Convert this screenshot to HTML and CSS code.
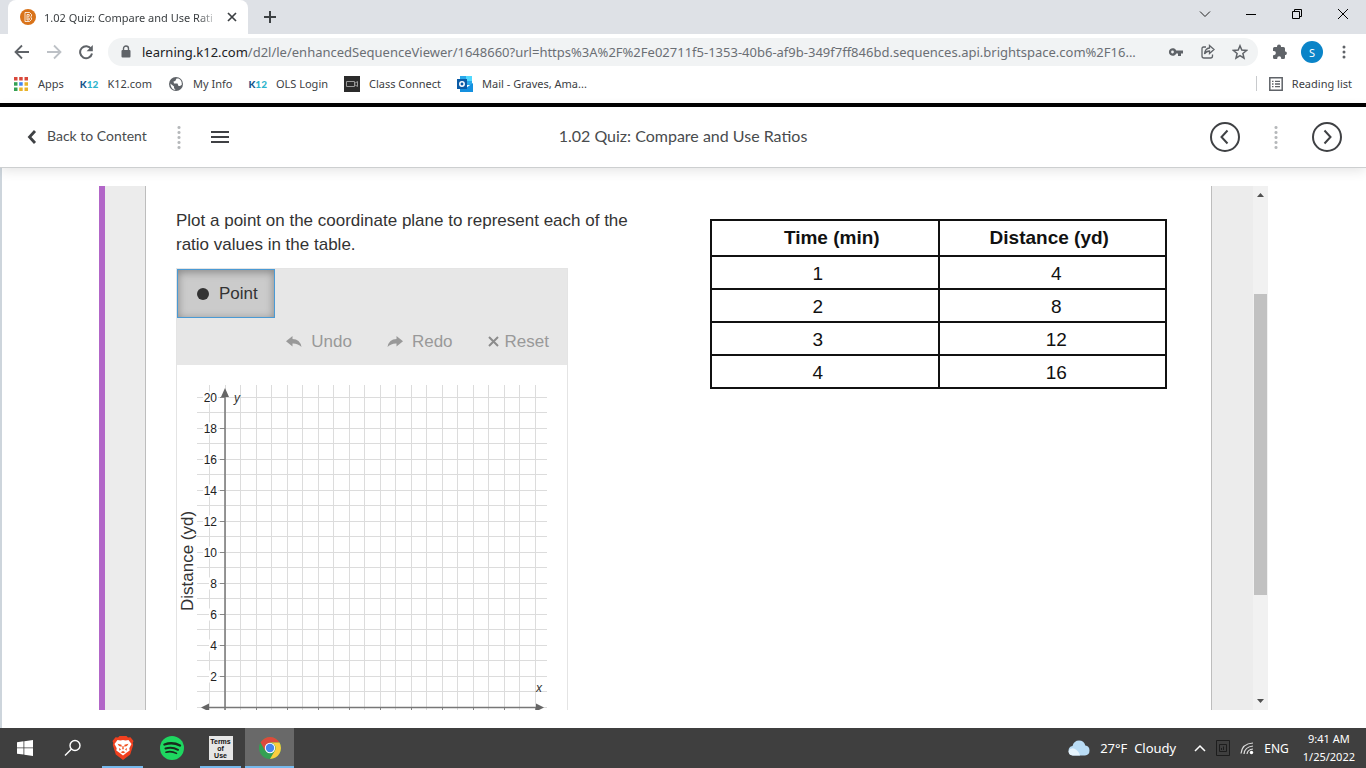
FILE: index.html
```html
<!DOCTYPE html>
<html lang="en">

<head>
    <meta charset="UTF-8">
    <title>1.02 Quiz: Compare and Use Ratios</title>
    <link rel="stylesheet" href="styles.css">
</head>

<body>
    <div class="tab-strip">
        <div class="tab">
            <svg class="tab-icon" width="16" height="16" viewBox="0 0 16 16">
                <circle cx="8" cy="8" r="8" fill="#d9731a"/>
                <path d="M5 3.500h4.500l2 2v1.700l-1 .8 1 .8v1.700l-2 2H5zM7 5.500v5.500M7 5.500h2.200v1.800H7.500M7.500 9h1.700v2H7" fill="none" stroke="#fff" stroke-width=".8"/>
            </svg>
            <span class="tab-title">1.02 Quiz: Compare and Use Rati</span>
            <button class="icon-button" aria-label="Close tab">
                <svg width="10" height="10" viewBox="0 0 10 10"><path d="M1 1l8 8M9 1l-8 8" stroke="#3c4043" stroke-width="1.700"/></svg>
            </button>
        </div>
        <button class="icon-button new-tab" aria-label="New tab">
            <svg width="12" height="12" viewBox="0 0 12 12"><path d="M6 0v12M0 6h12" stroke="#3c4043" stroke-width="2"/></svg>
        </button>
        <div class="window-buttons">
            <button class="icon-button" aria-label="Search tabs"><svg width="12" height="12" viewBox="0 0 12 12"><path d="M1 3.500l5 5 5-5" fill="none" stroke="#222"/></svg></button>
            <button class="icon-button" aria-label="Minimize"><svg width="12" height="12" viewBox="0 0 12 12"><path d="M1 6.500h10" stroke="#000"/></svg></button>
            <button class="icon-button" aria-label="Restore"><svg width="12" height="12" viewBox="0 0 12 12"><path d="M1.500 3.500h7v7h-7zM3.500 3.500v-2h7v7h-2" fill="none" stroke="#000"/></svg></button>
            <button class="icon-button" aria-label="Close"><svg width="12" height="12" viewBox="0 0 12 12"><path d="M1 1l10 10M11 1L1 11" stroke="#000"/></svg></button>
        </div>
    </div>

    <div class="toolbar">
        <button class="icon-button" aria-label="Back"><svg width="16" height="16" viewBox="0 0 16 16"><path d="M15 8H2M8 1.500L1.500 8 8 14.500" fill="none" stroke="#5f6368" stroke-width="1.800"/></svg></button>
        <button class="icon-button" aria-label="Forward"><svg width="16" height="16" viewBox="0 0 16 16"><path d="M1 8h13M8 1.500L14.500 8 8 14.500" fill="none" stroke="#bdc1c6" stroke-width="1.800"/></svg></button>
        <button class="icon-button" aria-label="Reload"><svg width="16" height="16" viewBox="0 0 16 16"><path d="M13.200 5A6 6 0 1 0 14 9.500" fill="none" stroke="#5f6368" stroke-width="2"/><path d="M14.800 1v6.200H8.600z" fill="#5f6368"/></svg></button>
        <div class="address-bar">
            <svg width="10" height="14" viewBox="0 0 10 14"><path d="M2.500 6V3.500a2.500 2.500 0 0 1 5 0V6" fill="none" stroke="#5f6368" stroke-width="1.400"/><rect x=".5" y="5" width="9" height="7.500" rx="1" fill="#5f6368"/></svg>
            <div class="url"><span class="host">learning.k12.com</span>/d2l/le/enhancedSequenceViewer/1648660?url=https%3A%2F%2Fe02711f5-1353-40b6-af9b-349f7ff846bd.sequences.api.brightspace.com%2F16...</div>
            <button class="icon-button" aria-label="Saved passwords"><svg width="16" height="16" viewBox="0 0 16 16"><path d="M8.200 6.500A3.800 3.800 0 1 0 8.200 9.500H10V12h3V9.500h2V6.500zM4.500 9.400a1.400 1.400 0 1 1 0-2.800 1.400 1.400 0 0 1 0 2.800z" fill="#5f6368" fill-rule="evenodd"/></svg></button>
            <button class="icon-button" aria-label="Share"><svg width="16" height="16" viewBox="0 0 16 16"><path d="M6 3H3.500Q2 3 2 4.500v7.500q0 2 2 2h6.500q2 0 2-2v-1.500M9.500 1.500L14 5.500l-4.500 4V7Q6.500 7 4.500 10 5 4.500 9.500 4z" fill="none" stroke="#5f6368" stroke-width="1.300"/></svg></button>
            <button class="icon-button" aria-label="Bookmark this page"><svg width="16" height="16" viewBox="0 0 16 16"><path d="M8 1.800l1.800 4.300 4.700.4-3.600 3 1.100 4.600L8 11.600l-4 2.500 1.100-4.600-3.600-3 4.700-.4z" fill="none" stroke="#5f6368" stroke-width="1.500"/></svg></button>
        </div>
        <div class="toolbar-right">
            <button class="icon-button" aria-label="Extensions"><svg width="16" height="16" viewBox="0 0 16 16"><path d="M13.500 7.500H13V4.500Q13 3 11.500 3H9V2.500a2 2 0 0 0-4 0V3H2.500Q1 3 1 4.500V7h.8a2 2 0 0 1 0 4.200H1v2.300Q1 15 2.500 15h2.700v-.8a2 2 0 0 1 4 0v.8h2.300q1.500 0 1.500-1.500v-2.500h.5a1.800 1.800 0 0 0 0-3.500z" fill="#5f6368"/></svg></button>
            <button class="avatar">S</button>
            <button class="icon-button" aria-label="Menu"><svg width="16" height="16" viewBox="0 0 16 16" fill="#5f6368"><circle cx="8" cy="3" r="1.500"/><circle cx="8" cy="8" r="1.500"/><circle cx="8" cy="13" r="1.500"/></svg></button>
        </div>
    </div>

    <nav class="bookmarks">
        <a href="#" class="bookmark apps">
            <svg width="14" height="14" viewBox="0 0 14 14">
                <path d="M0 0h3.500v3.500H0zM5.200 0h3.500v3.500H5.200zM10.500 0H14v3.500h-3.500z" fill="#d9483b"/>
                <path d="M0 5.200h3.500v3.500H0z" fill="#34a053"/><path d="M5.200 5.200h3.500v3.500H5.200z" fill="#4285f4"/>
                <path d="M10.500 5.200H14v3.500h-3.500zM5.200 10.500h3.500V14H5.200zM10.500 10.500H14V14h-3.500z" fill="#e9b32a"/><path d="M0 10.500h3.500V14H0z" fill="#34a053"/>
            </svg>Apps</a>
        <a href="#" class="bookmark"><span class="k12">K<span class="k12-num">12</span></span>K12.com</a>
        <a href="#" class="bookmark">
            <svg width="16" height="16" viewBox="0 0 16 16"><circle cx="8" cy="8" r="7" fill="#5f6368"/><path d="M8.500 2.500Q8 5 5.500 5.500L6 7.500h3.500l1 2.500H12l1.800-1.200Q14 4 10.500 2.500zM2.300 7.500L6 10.500v1.500l1.500 2Q3 13.500 2.300 7.500z" fill="#fff"/></svg>My Info</a>
        <a href="#" class="bookmark"><span class="k12">K<span class="k12-num">12</span></span>OLS Login</a>
        <a href="#" class="bookmark">
            <svg width="16" height="16" viewBox="0 0 16 16"><path d="M0 0h16v16H0z" fill="#2b2b2b"/><path d="M2.500 5.500h8v5h-8zM10.500 7.500l3-2v5l-3-2" fill="none" stroke="#999"/></svg>Class Connect</a>
        <a href="#" class="bookmark">
            <svg width="16" height="16" viewBox="0 0 16 16"><path d="M3 0h12v9H3z" fill="#28a8ea"/><path d="M9 0h6v5H9z" fill="#50d9ff"/><path d="M3 9l6 3 7-5v9H3z" fill="#1490df"/><path d="M0 3h10v10H0z" fill="#0a5ba6"/><circle cx="5" cy="8" r="2.200" fill="none" stroke="#fff" stroke-width="1.500"/></svg>Mail - Graves, Ama...</a>
        <a href="#" class="bookmark reading-list">
            <svg width="14" height="14" viewBox="0 0 14 14"><path d="M.8.800h12.400v12.400H.8z" fill="none" stroke="#5f6368" stroke-width="1.500"/><path d="M3 4.300h1.500M6 4.300h5M3 7h1.500M6 7h5M3 9.700h1.500M6 9.700h5" stroke="#5f6368" stroke-width="1.300"/></svg>Reading list</a>
    </nav>

    <header class="viewer-header">
        <div class="header-left">
            <a href="#" class="back-link">
                <svg width="10" height="14" viewBox="0 0 10 14"><path d="M8 1L2.500 7 8 13" fill="none" stroke="#3f4144" stroke-width="2.800"/></svg><span class="back-text">Back to Content</span></a>
            <span class="dots"></span>
            <button class="icon-button" aria-label="Table of contents"><svg width="18" height="12" viewBox="0 0 18 12"><path d="M0 1h18M0 6h18M0 11h18" stroke="#3f4144" stroke-width="2"/></svg></button>
        </div>
        <h1 class="viewer-title">1.02 Quiz: Compare and Use Ratios</h1>
        <div class="header-right">
            <button class="icon-button" aria-label="Previous"><svg width="30" height="30" viewBox="0 0 30 30" fill="none" stroke="#3f4144" stroke-width="2"><circle cx="15" cy="15" r="14"/><path d="M17.500 8.500L11.500 15l6 6.500"/></svg></button>
            <span class="dots"></span>
            <button class="icon-button" aria-label="Next"><svg width="30" height="30" viewBox="0 0 30 30" fill="none" stroke="#3f4144" stroke-width="2"><circle cx="15" cy="15" r="14"/><path d="M12.500 8.500l6 6.500-6 6.500"/></svg></button>
        </div>
    </header>

    <main class="viewer">
        <div class="quiz">
            <div class="question">
                <section class="plot">
                    <p class="prompt">Plot a point on the coordinate plane to represent each of the ratio values in the table.</p>
                    <div class="graph-tool">
                        <div class="graph-bar">
                            <button class="point-button"><span class="point-dot"></span>Point</button>
                            <div class="actions">
                                <button class="action" disabled><svg width="16" height="12" viewBox="0 0 16 12"><path d="M6.500 0v3Q14 3 15.500 11 12 7.300 6.500 7.500v3L0 5.200z" fill="#999"/></svg>Undo</button>
                                <button class="action" disabled><svg width="16" height="12" viewBox="0 0 16 12"><path d="M9.500 0v3Q2 3 .5 11 4 7.300 9.500 7.500v3L16 5.200z" fill="#999"/></svg>Redo</button>
                                <button class="action reset" disabled><svg width="11" height="11" viewBox="0 0 11 11"><path d="M1 1l9 9M10 1l-9 9" stroke="#8c8c8c" stroke-width="2"/></svg>Reset</button>
                            </div>
                        </div>
                        <svg class="graph" id="graph" width="390" height="400" viewBox="0 0 390 400">
                            <g id="grid" class="grid"></g>
                            <g id="labels" class="tick-label"></g>
                            <path class="axis" d="M48 28v372M28 342.500h335"/>
                            <path class="arrow" d="M48 23l-4 9h8zM24 342.500l8-4v8zM367 342.500l-8-4v8z"/>
                            <text class="axis-name" x="57" y="37">y</text>
                            <text class="axis-name" x="359" y="327">x</text>
                            <text class="axis-title" transform="translate(16 246) rotate(-90)">Distance (yd)</text>
                        </svg>
                    </div>
                </section>
                <section class="data">
                    <table class="ratios">
                        <thead>
                            <tr><th>Time (min)</th><th>Distance (yd)</th></tr>
                        </thead>
                        <tbody>
                            <tr><td>1</td><td>4</td></tr>
                            <tr><td>2</td><td>8</td></tr>
                            <tr><td>3</td><td>12</td></tr>
                            <tr><td>4</td><td>16</td></tr>
                        </tbody>
                    </table>
                </section>
            </div>
            <div class="scrollbar">
                <svg width="7" height="4" viewBox="0 0 7 4"><path d="M3.500 0L7 4H0z" fill="#505050"/></svg>
                <div class="track"><div class="thumb"></div></div>
                <svg width="7" height="4" viewBox="0 0 7 4"><path d="M0 0h7L3.500 4z" fill="#505050"/></svg>
            </div>
        </div>
    </main>

    <footer class="taskbar">
        <button class="task" aria-label="Start"><svg width="16" height="16" viewBox="0 0 16 16"><path d="M0 2.200l6.500-.9v6.200H0zM7.300 1.200L16 0v7.500H7.300zM0 8.300h6.500v6.300L0 13.700zM7.300 8.300H16V16l-8.700-1.200z" fill="#fff"/></svg></button>
        <button class="task" aria-label="Search"><svg width="20" height="18" viewBox="0 0 20 18"><circle cx="11" cy="6.500" r="5" fill="none" stroke="#fff" stroke-width="1.400"/><path d="M7.500 10L1 16.500" stroke="#fff" stroke-width="1.500"/></svg></button>
        <button class="task running" aria-label="Brave">
            <svg width="22" height="24" viewBox="0 0 22 24"><path d="M6 1.500L7.500 0h7L16 1.500l2.500-.2L21.500 5l-.8 2 .5 2-3 9.500L11 24l-7.200-5.500L.8 9l.5-2-.8-2 3-3.700z" fill="#f1401f"/><path d="M5.500 4l3 .6L11 4l2.500.6 3-.6 3 4-2.200 4.200.4 2.300-3.200 2.300L11 19.500l-3.500-2.700-3.200-2.300.4-2.300L2.500 8z" fill="#fff"/><path d="M5.500 7.800l4 .9.200 2L7 10zM16.500 7.800l-4 .9-.2 2L15 10zM7 12l2 1.200-1.500 1.500zM15 12l-2 1.200 1.500 1.500zM8.500 16.200L11 15l2.500 1.200L11 17.200zM10.500 10h1l.3 3-.8.500-.8-.5z" fill="#f1501f"/></svg>
        </button>
        <button class="task" aria-label="Spotify">
            <svg width="24" height="24" viewBox="0 0 24 24"><circle cx="12" cy="12" r="12" fill="#1ed760"/><path d="M4.500 8.500Q12.500 5.500 20 9.500" fill="none" stroke="#182b1d" stroke-width="2.400" stroke-linecap="round"/><path d="M5.500 12.500q6.500-2 12.500 1.300" fill="none" stroke="#182b1d" stroke-width="2" stroke-linecap="round"/><path d="M6 16.200q5.500-1.500 10.500 1.200" fill="none" stroke="#182b1d" stroke-width="1.600" stroke-linecap="round"/></svg>
        </button>
        <button class="task running"><span class="terms">Terms<br>of<br>Use</span></button>
        <button class="task active" aria-label="Chrome">
            <svg width="22" height="22" viewBox="0 0 22 22"><circle cx="11" cy="11" r="11" fill="#34a053"/><path d="M1.500 5.500A11 11 0 0 1 20.500 5.500H11L6.200 13.700z" fill="#dc4a3d"/><path d="M20.500 5.500A11 11 0 0 1 11 22l4.800-8.200A5.500 5.500 0 0 0 11 5.500z" fill="#fbcd3f"/><circle cx="11" cy="11" r="5.200" fill="#fff"/><circle cx="11" cy="11" r="4.200" fill="#4684ee"/></svg>
        </button>
        <div class="tray">
            <svg width="22" height="16" viewBox="0 0 22 16"><path d="M5 15.500a4.800 4.800 0 0 1-.5-9.500Q6 .5 11 .5q5 0 6.300 5 4.200.5 4.200 5t-4.500 5z" fill="#b9dcf5"/><path d="M4.500 15.500q-4-.5-4-4.500Q3 7 7 9q4 2 5 6.500z" fill="#e7f4fd"/></svg>
            <span class="weather">27°F&nbsp; Cloudy</span>
            <svg width="12" height="8" viewBox="0 0 12 8"><path d="M1 7l5-5 5 5" fill="none" stroke="#fff" stroke-width="1.500"/></svg>
            <svg width="14" height="16" viewBox="0 0 14 16"><path d="M.5.500h13v15H.5zM3.500 4.500h7v7h-7zM5.500 8v2M7.500 6.500V10" fill="none" stroke="#1d1d1d"/></svg>
            <svg width="14" height="14" viewBox="0 0 14 14"><path d="M1 12.500Q2 2.500 13 2M4 13Q4.500 6 13 5M7 13q.5-4.500 6-5" fill="none" stroke="#ddd" stroke-width="1.200"/><circle cx="11.500" cy="11.500" r="1.700" fill="#fff"/></svg>
            <span class="lang">ENG</span>
            <div class="clock">9:41 AM<br>1/25/2022</div>
        </div>
    </footer>

    <script>
        let step = 15.5;
        let originX = 48;
        let originY = 342;

        function add(parent, tag, attrs, text) {
            let el = document.createElementNS('http://www.w3.org/2000/svg', tag);
            for (let key in attrs) {
                el.setAttribute(key, attrs[key]);
            }
            if (text) {
                el.textContent = text;
            }
            document.getElementById(parent).appendChild(el);
        }

        // vertical and horizontal grid lines
        for (let i = -1; i <= 20; i++) {
            let x = Math.floor(originX + i * step) + 0.5;
            let y = Math.floor(originY - i * step) + 0.5;
            add('grid', 'path', { d: `M${x} 20V400` });
            add('grid', 'path', { d: `M20 ${y}H370` });
        }

        // ticks and numbers on every second line
        for (let i = 2; i <= 20; i += 2) {
            let x = Math.floor(originX + i * step) + 0.5;
            let y = Math.floor(originY - i * step) + 0.5;
            add('grid', 'path', { d: `M${x} 342v4`, class: 'tick' });
            add('labels', 'rect', { x: i < 10 ? 32 : 26, y: y - 6, width: i < 10 ? 9 : 15, height: 12, class: 'label-back' });
            add('labels', 'text', { x: 40, y: y + 4 }, i);
            add('grid', 'path', { d: `M43 ${y}h5`, class: 'tick' });
        }
    </script>
</body>

</html>
```

FILE: styles.css
```css
* {
    box-sizing: border-box;
}

body {
    margin: 0;
    height: 100vh;
    display: flex;
    flex-direction: column;
    overflow: hidden;
    background: #fff;
    color: #3c4043;
    font-family: "Noto Sans", "Open Sans", sans-serif;
    font-size: 11px;
}

button {
    font: inherit;
    color: inherit;
    border: 0;
    padding: 0;
    background: none;
}

a {
    color: inherit;
    text-decoration: none;
}

svg {
    display: block;
    flex: none;
}

.icon-button {
    display: flex;
    flex: none;
}

/* browser window */
.tab-strip {
    display: flex;
    align-items: center;
    flex: none;
    height: 34px;
    padding: 0 17px 0 8px;
    background: #dee1e6;
}

.tab {
    display: flex;
    align-items: center;
    width: 240px;
    height: 34px;
    padding: 0 11px 0 12px;
    background: #fff;
    border-radius: 8px 8px 0 0;
}

.tab-title {
    flex: 1;
    margin: 0 8px;
    white-space: nowrap;
    -webkit-mask-image: linear-gradient(to right, #000 88%, transparent);
    mask-image: linear-gradient(to right, #000 88%, transparent);
}

.new-tab {
    margin-left: 16px;
}

.window-buttons {
    display: flex;
    gap: 34px;
    margin-left: auto;
    padding-bottom: 6px;
}

.toolbar {
    display: flex;
    align-items: center;
    gap: 16px;
    flex: none;
    height: 36px;
    padding: 0 14px;
}

.address-bar {
    display: flex;
    align-items: center;
    gap: 16px;
    flex: 1;
    min-width: 0;
    height: 28px;
    margin: 0 -2px;
    padding: 0 10px 0 13px;
    background: #f1f3f4;
    border-radius: 14px;
}

.url {
    flex: 1;
    min-width: 0;
    margin-left: -5px;
    white-space: nowrap;
    color: #6b6f74;
    font-size: 13px;
}

.host {
    color: #202124;
}

.toolbar-right {
    display: flex;
    align-items: center;
    gap: 13px;
}

.avatar {
    width: 22px;
    height: 22px;
    border-radius: 50%;
    background: #0a84c8;
    color: #fff;
}

.bookmarks {
    display: flex;
    align-items: center;
    gap: 16px;
    flex: none;
    height: 37px;
    padding: 0 14px;
    padding-bottom: 6px;
    border-bottom: 4px solid #000;
}

.bookmark {
    display: flex;
    align-items: center;
    gap: 9px;
    white-space: nowrap;
}

.apps {
    gap: 10px;
}

.k12 {
    color: #17568c;
    font: 900 10px Lato, sans-serif;
}

.k12-num {
    color: #2fb4cc;
}

.reading-list {
    margin-left: auto;
    padding-left: 12px;
    border-left: 1px solid #c8cacd;
}

/* course viewer */
.viewer-header {
    position: relative;
    display: flex;
    align-items: center;
    flex: none;
    height: 61px;
    padding: 0 24px;
    border-bottom: 1px solid #cdcfd0;
    box-shadow: 0 2px 12px rgba(0, 0, 0, 0.12);
    font-family: Lato, sans-serif;
    color: #494c4e;
}

.header-left,
.header-right {
    display: flex;
    align-items: center;
    flex: 1;
    gap: 30px;
}

.header-right {
    justify-content: flex-end;
    gap: 34px;
}

.back-link {
    display: flex;
    align-items: center;
    gap: 10px;
    padding-left: 3px;
    font-size: 14px;
    white-space: nowrap;
}

.dots {
    width: 4px;
    height: 25px;
    background: radial-gradient(circle, #b5b8ba 1px, transparent 2px) 0 0 / 4px 5px;
}

.viewer-title {
    margin: 0;
    font-size: 16px;
    font-weight: 400;
}

.back-text,
.viewer-title {
    padding-bottom: 3px;
}

.viewer {
    display: flex;
    flex: 1;
    min-height: 0;
    padding: 18px 98px 18px 97px;
    border-left: 2px solid #cdd5dc;
}

.quiz {
    display: flex;
    flex: 1;
    min-height: 0;
    border-left: 6px solid #b266c8;
    background: #ececec;
    padding-left: 40px;
}

.question {
    display: flex;
    gap: 77px;
    flex: 1;
    overflow: hidden;
    padding: 23px 44px 0 30px;
    background: #fff;
    border: solid #bdbdbd;
    border-width: 0 1px;
    color: #333;
    font-family: "Liberation Sans", Arial, sans-serif;
    font-size: 17px;
}

.plot,
.data {
    flex: 1;
    min-width: 0;
}

.prompt {
    margin: 0 0 11px;
    line-height: 24px;
}

.graph-tool {
    width: 392px;
    border: 1px solid #e4e4e4;
}

.graph-bar {
    display: flex;
    flex-direction: column;
    align-items: flex-start;
    height: 96px;
    background: #e7e7e7;
}

.point-button {
    display: flex;
    align-items: center;
    gap: 10px;
    height: 49px;
    padding: 0 16px 0 19px;
    border: 1px solid #4a9ad4;
    background: #cbcbcb;
    box-shadow: inset 0 2px 8px rgba(0, 0, 0, 0.35);
}

.point-dot {
    width: 12px;
    height: 12px;
    border-radius: 50%;
    background: #333;
}

.actions {
    display: flex;
    align-items: center;
    align-self: flex-end;
    gap: 35px;
    height: 47px;
    padding-right: 18px;
}

.action {
    display: flex;
    align-items: center;
    gap: 9px;
    color: #999;
}

.reset {
    gap: 6px;
}

.grid path {
    stroke: #dcdcdc;
}

.grid .tick {
    stroke: #888;
}

.axis {
    fill: none;
    stroke: #777;
    stroke-width: 1.5;
}

.arrow {
    fill: #666;
}

.label-back {
    fill: #fff;
}

.tick-label {
    fill: #222;
    font-size: 12px;
    text-anchor: end;
}

.axis-name {
    fill: #333;
    font-size: 12px;
    font-style: italic;
}

.axis-title {
    fill: #333;
    font-size: 17px;
}

.data {
    padding-top: 10px;
}

.ratios {
    width: 100%;
    border: 2px solid #000;
    border-collapse: collapse;
    color: #111;
    font-size: 19px;
    line-height: 20px;
    text-align: center;
}

.ratios th,
.ratios td {
    width: 50%;
    height: 33px;
    padding: 3px 14px 0 0;
    border: 2px solid #111;
}

.ratios th {
    height: 36px;
    padding: 0 0 0 14px;
}

.ratios th + th {
    padding: 0 6px 0 0;
}

.ratios td + td {
    padding: 3px 0 0 8px;
}

.scrollbar {
    display: flex;
    flex-direction: column;
    align-items: center;
    width: 15px;
    margin-left: 41px;
    padding: 7px 0;
    background: #f1f1f1;
}

.track {
    display: flex;
    flex: 1;
    flex-direction: column;
    margin: 7px 0;
}

.track::before {
    content: "";
    flex: 90;
}

.track::after {
    content: "";
    flex: 97;
}

.thumb {
    flex: 301;
    width: 13px;
    background: #c1c1c1;
}

/* windows taskbar */
.taskbar {
    display: flex;
    flex: none;
    height: 40px;
    background: #3f3f3f;
    color: #fff;
}

.task {
    display: flex;
    align-items: center;
    justify-content: center;
    position: relative;
    width: 49px;
}

.running::after,
.active::after {
    content: "";
    position: absolute;
    bottom: 0;
    left: 4px;
    right: 4px;
    height: 2px;
    background: #76b9ed;
}

.active {
    background: #696969;
}

.active::after {
    left: 0;
    right: 0;
}

.terms {
    width: 24px;
    height: 24px;
    padding-top: 2px;
    background: #e6e6e6;
    color: #111;
    font: bold 7px/7px "Liberation Sans", Arial, sans-serif;
}

.tray {
    display: flex;
    align-items: center;
    gap: 10px;
    margin-left: auto;
    padding-right: 11px;
}

.weather {
    margin-right: 8px;
    font-size: 13px;
}

.lang {
    font-size: 12px;
}

.clock {
    margin-left: 4px;
    line-height: 18px;
    text-align: center;
}
```
